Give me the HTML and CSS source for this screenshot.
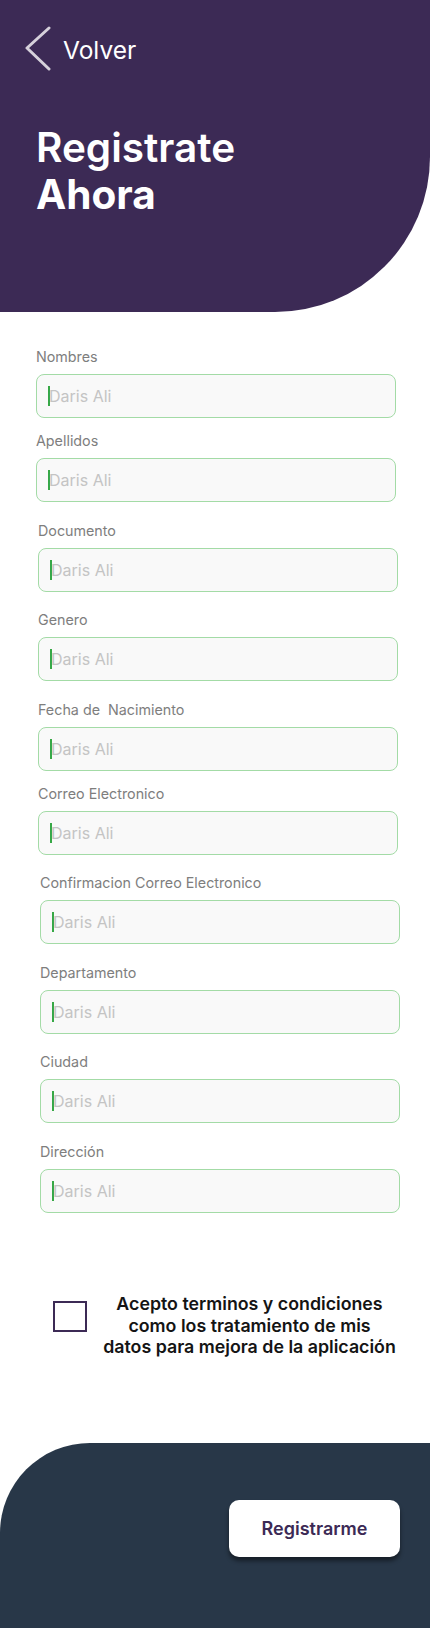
FILE: index.html
```html
<!DOCTYPE html>
<html lang="es">
<head>
<meta charset="utf-8">
<title>Registrate Ahora</title>
<link rel="stylesheet" href="styles.css">
</head>
<body>
<div class="page">
  <header class="hero">
    <a class="back" href="#">
      <svg class="back__icon" width="26" height="46" viewBox="0 0 26 46" aria-hidden="true">
        <path d="M24 2 L2 22 L24 43" fill="none" stroke="#D6D1DB" stroke-width="3" stroke-linecap="round" stroke-linejoin="round"/>
      </svg>
      <span class="back__text">Volver</span>
    </a>
    <h1 class="hero__title"><span class="hero__line">Registrate</span><span class="hero__line hero__line--strong">Ahora</span></h1>
  </header>

  <main class="form">
    <div class="field">
      <div class="field__label">Nombres</div>
      <div class="field__box"><span class="field__caret"></span><span class="field__ph">Daris Ali</span></div>
    </div>
    <div class="field field--tight">
      <div class="field__label">Apellidos</div>
      <div class="field__box"><span class="field__caret"></span><span class="field__ph">Daris Ali</span></div>
    </div>
    <div class="field field--s1">
      <div class="field__label">Documento</div>
      <div class="field__box"><span class="field__caret"></span><span class="field__ph">Daris Ali</span></div>
    </div>
    <div class="field field--s1">
      <div class="field__label">Genero</div>
      <div class="field__box"><span class="field__caret"></span><span class="field__ph">Daris Ali</span></div>
    </div>
    <div class="field field--s1">
      <div class="field__label">Fecha de&nbsp; Nacimiento</div>
      <div class="field__box"><span class="field__caret"></span><span class="field__ph">Daris Ali</span></div>
    </div>
    <div class="field field--s1 field--tight">
      <div class="field__label">Correo Electronico</div>
      <div class="field__box"><span class="field__caret"></span><span class="field__ph">Daris Ali</span></div>
    </div>
    <div class="field field--s2">
      <div class="field__label">Confirmacion Correo Electronico</div>
      <div class="field__box"><span class="field__caret"></span><span class="field__ph">Daris Ali</span></div>
    </div>
    <div class="field field--s2">
      <div class="field__label">Departamento</div>
      <div class="field__box"><span class="field__caret"></span><span class="field__ph">Daris Ali</span></div>
    </div>
    <div class="field field--s2">
      <div class="field__label">Ciudad</div>
      <div class="field__box"><span class="field__caret"></span><span class="field__ph">Daris Ali</span></div>
    </div>
    <div class="field field--s2">
      <div class="field__label">Dirección</div>
      <div class="field__box"><span class="field__caret"></span><span class="field__ph">Daris Ali</span></div>
    </div>
  </main>

  <section class="terms">
    <span class="terms__box"></span>
    <p class="terms__text">Acepto terminos y condiciones<br>como los tratamiento de mis<br>datos para mejora de la aplicación</p>
  </section>

  <footer class="footer">
    <button class="footer__btn" type="button">Registrarme</button>
  </footer>
</div>
</body>
</html>
```

FILE: styles.css
```css
* {
  box-sizing: border-box;
}

html, body {
  margin: 0;
  padding: 0;
  background: #ffffff;
}

body {
  font-family: "Inter", "Liberation Sans", sans-serif;
}

.page {
  width: 430px;
  min-height: 1628px;
  display: flex;
  flex-direction: column;
  overflow: hidden;
}

/* ---------- Header ---------- */
.hero {
  height: 312px;
  background: #3C2A55;
  border-bottom-right-radius: 155px;
  padding: 26px 0 0 25px;
  display: flex;
  flex-direction: column;
}

.back {
  display: flex;
  align-items: center;
  gap: 12px;
  text-decoration: none;
  height: 46px;
}

.back__icon {
  display: block;
  flex: none;
}

.back__text {
  color: #ffffff;
  font-size: 24.5px;
  line-height: 29px;
  font-weight: 400;
  margin-top: 2px;
}

.hero__title {
  margin: 52px 0 0 11px;
  color: #ffffff;
  font-size: 40.5px;
  line-height: 47px;
  display: flex;
  flex-direction: column;
  letter-spacing: 0;
}

.hero__line {
  font-weight: 600;
}

.hero__line--strong {
  font-weight: 700;
}

/* ---------- Form ---------- */
.form {
  padding: 36px 0 0 36px;
  display: flex;
  flex-direction: column;
}

.field {
  display: flex;
  flex-direction: column;
  gap: 8px;
  margin-top: 19.5px;
}

.field:first-child {
  margin-top: 0;
}

.field--tight {
  margin-top: 14px;
}

.field--s1 {
  padding-left: 2px;
}

.field--s2 {
  padding-left: 4px;
}

.field__label {
  font-size: 14.3px;
  line-height: 18px;
  color: #7E7E7E;
}

.field__box {
  width: 360px;
  height: 44px;
  border: 1px solid #A3DBA6;
  border-radius: 8px;
  background: #F9F9F9;
  display: flex;
  align-items: center;
  padding-left: 11px;
}

.field__caret {
  width: 2px;
  height: 20px;
  background: #37A846;
  flex: none;
}

.field__ph {
  font-size: 16px;
  line-height: 20px;
  color: #C4C4C4;
  margin-left: -1px;
}

/* ---------- Terms ---------- */
.terms {
  margin-top: 80.5px;
  padding-left: 53px;
  display: flex;
  align-items: flex-start;
  gap: 10.5px;
}

.terms__box {
  flex: none;
  width: 34px;
  height: 31px;
  border: 2px solid #3C2A55;
  margin-top: 7.5px;
}

.terms__text {
  margin: 0;
  width: 304px;
  flex: none;
  text-align: center;
  white-space: nowrap;
  font-size: 17.8px;
  line-height: 21.7px;
  font-weight: 600;
  color: #141414;
}

/* ---------- Footer ---------- */
.footer {
  margin-top: auto;
  height: 185px;
  background: #283748;
  border-top-left-radius: 90px;
  display: flex;
  justify-content: flex-end;
  align-items: flex-start;
  padding: 57px 30px 0 0;
}

.footer__btn {
  width: 171px;
  height: 57px;
  border: none;
  border-radius: 10px;
  background: #ffffff;
  box-shadow: 0 4px 4px rgba(0, 0, 0, 0.45);
  font-family: "Inter", "Liberation Sans", sans-serif;
  font-size: 18px;
  font-weight: 600;
  color: #3C2A55;
  cursor: pointer;
}
```
